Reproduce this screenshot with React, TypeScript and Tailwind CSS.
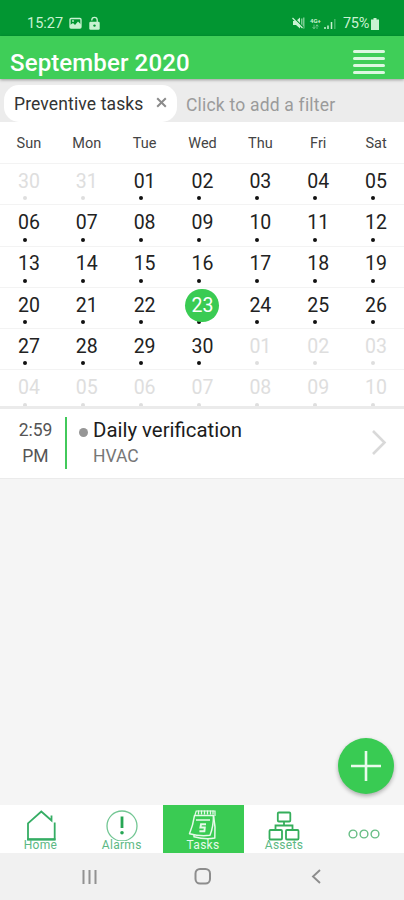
import { clsx } from 'clsx'

interface CalendarDay {
  label: string
  muted: boolean
}

const weekdays = ['Sun', 'Mon', 'Tue', 'Wed', 'Thu', 'Fri', 'Sat']

const pad = (n: number) => String(n).padStart(2, '0')

// September 2020 starts on a Tuesday
const days: CalendarDay[] = [
  ...[30, 31].map((n) => ({ label: pad(n), muted: true })),
  ...Array.from({ length: 30 }, (_, i) => ({ label: pad(i + 1), muted: false })),
  ...Array.from({ length: 10 }, (_, i) => ({ label: pad(i + 1), muted: true })),
]

function StatusBar() {
  return (
    <div className="flex h-9 items-end bg-[#029632] pr-[25px] pb-[4px] pl-[27px] text-[#c9f2d2]">
      <span className="w-[42px] text-[14.5px] leading-[16px]">15:27</span>
      <svg className="mb-[2px] h-[13px] w-[13px]" viewBox="0 0 13 13">
        <rect x="1" y="1.5" width="11" height="9.5" rx="1" fill="none" stroke="currentColor" strokeWidth="1.3" />
        <path d="M1 11V8l3-2 2 2 3-3.5 3 3V11z" fill="currentColor" />
        <circle cx="4" cy="4" r="0.9" fill="currentColor" />
      </svg>
      <svg className="mb-[2px] ml-[7px] h-[14px] w-[11px]" viewBox="0 0 11 14">
        <path d="M2.8 4.6V4a2.7 2.7 0 0 1 5.4 0v3" fill="none" stroke="currentColor" strokeWidth="1.3" />
        <rect x="0.3" y="5.7" width="10.4" height="8" rx="1.2" fill="currentColor" />
        <circle cx="5.5" cy="9.6" r="1.2" fill="#029632" />
      </svg>
      <div className="ml-auto flex items-end">
        <svg className="mb-[3px] h-[12px] w-[13px]" viewBox="0 0 13 12">
          <path d="M1 4h3l4-3.5v11L4 8H1z" fill="currentColor" />
          <path d="M9.8 1.5v9M11.8 0.5v11" stroke="currentColor" strokeWidth="1.2" opacity=".75" />
          <path d="M1.5 0.5L11.5 10.5" stroke="#029632" strokeWidth="1.2" />
          <path d="M0.5 1L10.5 11" stroke="currentColor" strokeWidth="1.2" />
        </svg>
        <div className="mb-[2px] ml-[4px] flex w-[13px] flex-col items-center text-[6px] leading-[6px] font-bold">
          <span>4G+</span>
          <svg className="h-[6px] w-[7px]" viewBox="0 0 7 6">
            <path d="M2 .5v4M.5 3L2 4.8 3.4 3M5 5V1M3.7 2.4L5 .7l1.4 1.7" fill="none" stroke="currentColor" strokeWidth=".8" opacity=".6" />
          </svg>
        </div>
        <svg className="mb-[3px] ml-[2px] h-[10px] w-[12px]" viewBox="0 0 12 10">
          <path d="M1 8v2M4 6.5V10M7.5 3v7" stroke="currentColor" strokeWidth="1.5" />
          <path d="M10.8 0v10" stroke="currentColor" strokeWidth="1.5" opacity=".35" />
        </svg>
        <span className="ml-[7px] text-[14.5px] leading-[16px] tracking-[-0.3px]">75%</span>
        <svg className="mb-[2px] ml-[2px] h-[12px] w-[8px]" viewBox="0 0 8 12">
          <path d="M2.5 0h3v1.5H8V12H0V1.5h2.5z" fill="currentColor" />
        </svg>
      </div>
    </div>
  )
}

function Header() {
  return (
    <header className="relative z-10 flex h-[43px] items-center justify-between bg-[#3fce58] pr-[19px] pl-[10px] text-white shadow-[0_1px_3px_rgba(0,0,0,0.35)]">
      <h1 className="pt-[11px] text-[24px] leading-[34px] font-medium tracking-[0.12px]">September 2020</h1>
      <div className="flex flex-col gap-[4px] pt-[8px]">
        {[0, 1, 2, 3].map((i) => (
          <span key={i} className="h-[3px] w-8 rounded-full bg-[#ddf8e2]" />
        ))}
      </div>
    </header>
  )
}

function FilterBar() {
  return (
    <div className="flex h-[43px] items-end bg-[#ececec]">
      <div className="ml-1 flex h-[37px] w-[173px] items-center rounded-[15px] bg-white pl-[10px] text-[#333]">
        <span className="pt-[2px] text-[17.5px] tracking-[0.13px]">Preventive tasks</span>
        <svg className="mb-[3px] ml-auto mr-[10px] h-[11px] w-[11px]" viewBox="0 0 11 11">
          <path d="M1.2 1.2l8.6 8.6M9.8 1.2L1.2 9.8" stroke="#8b8b8b" strokeWidth="2" />
        </svg>
      </div>
      <span className="ml-[9px] text-[17.5px] leading-[34px] tracking-[0.2px] text-[#9b9b9b]">
        Click to add a filter
      </span>
    </div>
  )
}

function Calendar() {
  return (
    <section className="h-[287px] overflow-hidden border-b-[3px] border-[#ebebeb] bg-white">
      <div className="grid h-[41px] w-[405px] grid-cols-7 text-center text-[14.5px] leading-[43px] text-[#444]">
        {weekdays.map((day) => (
          <span key={day}>{day}</span>
        ))}
      </div>
      <div className="grid w-[405px] grid-cols-7">
        {days.map((day, index) => {
          const selected = !day.muted && day.label === '23'
          return (
            <div
              key={index}
              className={clsx(
                'relative flex h-[41.3px] flex-col items-center border-t border-[#f3f3f3] pt-px',
                day.muted ? 'text-[#dedede]' : 'text-[#222]'
              )}
            >
              {/* Event marker */}
              <span
                className={clsx(
                  'absolute top-[32.3px] left-[calc(50%-5.5px)] h-1 w-1 rounded-full',
                  day.muted ? 'bg-[#dedede]' : 'bg-[#111]'
                )}
              />
              <span
                className={clsx(
                  'relative flex h-[33px] w-[34px] items-center justify-center text-[19.5px]',
                  selected && 'rounded-full bg-[#3acb53] text-white'
                )}
              >
                {day.label}
              </span>
            </div>
          )
        })}
      </div>
    </section>
  )
}

function TaskRow() {
  return (
    <div className="flex h-[70px] border-b border-[#ebebeb] bg-white pt-[8px]">
      <div className="w-[65px] pt-px pl-[6px] text-center text-[17.5px] leading-[25.5px] text-[#555]">
        <div>2:59</div>
        <div>PM</div>
      </div>
      <div className="h-[52px] w-[2px] bg-[#42c95b]" />
      <span className="mt-[11px] ml-[12px] h-[9px] w-[9px] rounded-full bg-[#969696]" />
      <div className="ml-[5px] flex-1 pt-px">
        <div className="text-[20.4px] leading-[25px] text-[#1c1c1c]">Daily verification</div>
        <div className="text-[17.5px] leading-[27px] text-[#777]">HVAC</div>
      </div>
      <svg className="mt-[12px] mr-[17px] h-[27px] w-4" viewBox="0 0 16 27">
        <path d="M2 2l11.5 11.5L2 25" fill="none" stroke="#d9d9d9" strokeWidth="2.6" />
      </svg>
    </div>
  )
}

function HomeIcon() {
  return (
    <svg className="h-[32px] w-[32px]" viewBox="0 0 32 32" fill="none" stroke="#35ad64" strokeWidth="1.8">
      <path d="M29.7 13.500v17H3V14.300L16.300 2.500l10.200 9V6.500" />
      <path d="M2.200 30.300h28.300" strokeWidth="2" />
    </svg>
  )
}

function AlarmIcon() {
  return (
    <svg className="h-[32px] w-[32px]" viewBox="0 0 32 32" fill="none">
      <circle cx="16" cy="17" r="15" stroke="#72c693" strokeWidth="1.3" />
      <path d="M16 7.5v11.500" stroke="#26a654" strokeWidth="2.800" />
      <circle cx="16" cy="23.7" r="1.8" fill="#26a654" />
    </svg>
  )
}

function TasksIcon() {
  return (
    <svg className="h-[32px] w-[32px]" viewBox="0 0 32 32" fill="none" stroke="#e7faea" strokeWidth="1.5">
      {/* Front page, then the page behind it */}
      <path d="M7.500 6.500h19C26.500 13 25.500 20 23 26.300c-7 1-14 .2-20.500-1.500C5 19 6.500 13 7.500 6.500z" strokeLinejoin="round" />
      <path d="M26.500 6.500c1.500 7.500 2 15 1.300 22.500-7.300 1.500-14.300.5-20.800-1.300v-2" />
      <path d="M8 6l1.200-4h18.800v5" strokeWidth="1.200" />
      <path d="M11.500 1.500v4M14.500 1.500v4M17.500 1.500v4M20.500 1.500v4M23.500 1.500v4M26 1.500v4" strokeWidth="1.300" />
      <path d="M9 11h14" />
      <path d="M19 15.300h-5l-.6 3.200h4.400l-.4 3.700h-5" strokeWidth="1.900" />
    </svg>
  )
}

function AssetsIcon() {
  return (
    <svg className="h-[32px] w-[32px]" viewBox="0 0 32 32" fill="none" stroke="#35ae5b" strokeWidth="1.8">
      <rect x="9.8" y="3.500" width="12.500" height="9" rx="1" />
      <rect x="1.500" y="21" width="12.500" height="9.500" rx="1" />
      <rect x="18" y="21" width="12.500" height="9.500" rx="1" />
      <path d="M16 12.500v4M7.500 21v-4.500h17V21" />
    </svg>
  )
}

function MoreIcon() {
  return (
    <svg className="h-[12px] w-[32px]" viewBox="0 0 32 12" fill="none" stroke="#66bd84" strokeWidth="1.4">
      <circle cx="5" cy="6" r="3.900" />
      <circle cx="16" cy="6" r="3.900" />
      <circle cx="27" cy="6" r="3.900" />
    </svg>
  )
}

const tabs = [
  { label: 'Home', icon: HomeIcon },
  { label: 'Alarms', icon: AlarmIcon },
  { label: 'Tasks', icon: TasksIcon, active: true },
  { label: 'Assets', icon: AssetsIcon },
]

function TabBar() {
  return (
    <nav className="grid h-12 grid-cols-[81px_81.5px_81px_81px_1fr] bg-white">
      {tabs.map(({ label, icon: Icon, active }) => (
        <div
          key={label}
          className={clsx(
            'flex flex-col items-center pt-[4px] text-[12px] leading-[12px] tracking-[0.3px]',
            active ? 'bg-[#3acb53] text-[#e7faea]' : 'text-[#5cb884]'
          )}
        >
          <Icon />
          <span className="-mt-[2px]">{label}</span>
        </div>
      ))}
      <div className="flex items-center justify-center pt-[9px]">
        <MoreIcon />
      </div>
    </nav>
  )
}

function SystemNav() {
  return (
    <div className="flex h-[47px] items-center bg-[#f1f1f1] pl-[81px]">
      <svg className="h-4 w-[18px]" viewBox="0 0 18 16">
        <path d="M2.5 1v14M8.5 1v14M14.5 1v14" stroke="#929292" strokeWidth="2" />
      </svg>
      <svg className="ml-[95px] h-[18px] w-[18px]" viewBox="0 0 18 18">
        <rect x="1.5" y="1" width="14.5" height="14.5" rx="4.5" fill="none" stroke="#8d8d8d" strokeWidth="2" />
      </svg>
      <svg className="ml-[98px] h-4 w-3" viewBox="0 0 12 16">
        <path d="M10 1L3 7.500l7 6.500" fill="none" stroke="#8d8d8d" strokeWidth="1.9" />
      </svg>
    </div>
  )
}

export default function App() {
  return (
    <div className="flex h-[900px] w-[404px] flex-col overflow-hidden bg-[#f5f5f5] font-[Roboto,sans-serif]">
      <StatusBar />
      <Header />
      <FilterBar />
      <Calendar />
      <TaskRow />
      <main className="flex flex-1 items-end justify-end pr-[10px] pb-[11px]">
        <button className="flex h-[56px] w-[56px] items-center justify-center rounded-full bg-[#39cb53] shadow-[0_2px_4px_rgba(0,0,0,0.3)]">
          <svg className="h-8 w-8" viewBox="0 0 32 32">
            <path d="M16 1v30M1 16h30" stroke="#e9fbec" strokeWidth="2.6" />
          </svg>
        </button>
      </main>
      <TabBar />
      <SystemNav />
    </div>
  )
}
